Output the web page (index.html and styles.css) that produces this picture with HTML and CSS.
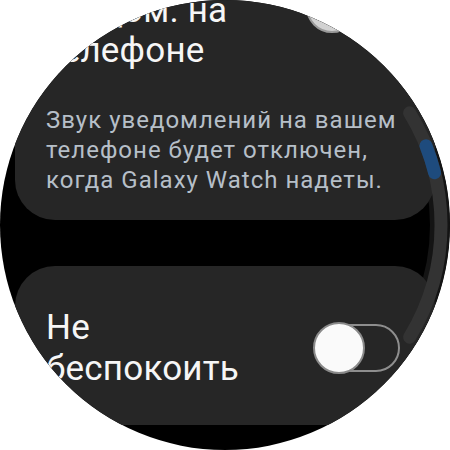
FILE: index.html
```html
<!DOCTYPE html>
<html lang="ru">
<head>
<meta charset="utf-8">
<link rel="stylesheet" href="styles.css">
</head>
<body>
<div class="screen">
  <svg class="ring" width="450" height="450" viewBox="0 0 450 450">
    <path d="M 389.7 86.8 A 215 215 0 0 1 389.7 363.2" fill="none" stroke="#141414" stroke-width="20"/>
  </svg>
  <div class="list">
    <div class="card card-first">
      <div class="row">
        <div class="title">Откл. звук уведом. на телефоне</div>
        <div class="toggle toggle-dim"><span class="knob"></span></div>
      </div>
      <div class="desc">Звук уведомлений на вашем телефоне будет отключен, когда Galaxy Watch надеты.</div>
    </div>
    <div class="card card-second">
      <div class="row">
        <div class="title">Не беспокоить</div>
        <div class="toggle"><span class="knob"></span></div>
      </div>
    </div>
  </div>
  <svg class="scroll" width="450" height="450" viewBox="0 0 450 450">
    <path d="M 409.6 112.8 A 216 216 0 0 1 409.6 337.2" fill="none" stroke="#333333" stroke-width="13" stroke-linecap="round"/>
    <path d="M 426.0 145.8 A 216 216 0 0 1 434.6 172.7" fill="none" stroke="#1e4b7d" stroke-width="13" stroke-linecap="round"/>
  </svg>
</div>
</body>
</html>
```

FILE: styles.css
```css
html, body {
  margin: 0;
  padding: 0;
  background: #ffffff;
}

.screen {
  position: relative;
  width: 450px;
  height: 450px;
  border-radius: 50%;
  overflow: hidden;
  background: #000000;
  font-family: Roboto, "Noto Sans", sans-serif;
}

.ring, .scroll {
  position: absolute;
  left: 0;
  top: 0;
}

.ring { z-index: 0; }
.scroll { z-index: 2; }

.list {
  position: relative;
  z-index: 1;
  height: 425px;
  overflow: hidden;
  display: flex;
  flex-direction: column;
  gap: 46px;
  padding: 0 15px;
}

.card {
  background: #262626;
  border-radius: 40px;
  padding: 0 35px 0 31px;
}

.card-first {
  margin-top: -79px;
  padding-top: 30px;
  padding-bottom: 25px;
}

.card-second {
  padding-top: 41px;
  min-height: 200px;
  flex-shrink: 0;
}

.row {
  display: flex;
  align-items: center;
  justify-content: space-between;
}

.title {
  color: #f6f6f6;
  font-size: 35px;
  line-height: 40px;
  width: 230px;
  letter-spacing: 0.2px;
}

.card-second .title {
  line-height: 41px;
}

.card-first .row {
  margin-bottom: 34px;
}

.desc {
  color: #b6bfc8;
  font-size: 24px;
  line-height: 30px;
  letter-spacing: 1px;
  margin-right: -10px;
}

.toggle {
  position: relative;
  width: 86px;
  height: 48px;
  box-sizing: border-box;
  border: 2px solid #8e8e8e;
  border-radius: 24px;
  flex-shrink: 0;
}

.knob {
  position: absolute;
  left: -3px;
  top: -4px;
  width: 52px;
  height: 52px;
  box-sizing: border-box;
  border-radius: 50%;
  background: #fafafa;
  border: 2px solid #8a8a8a;
}

.toggle-dim {
  border-color: #6a6a6a;
  margin-right: 7px;
  margin-top: -9px;
}

.toggle-dim .knob {
  background: #d2d2d2;
  border-color: #9a9a9a;
}
```
